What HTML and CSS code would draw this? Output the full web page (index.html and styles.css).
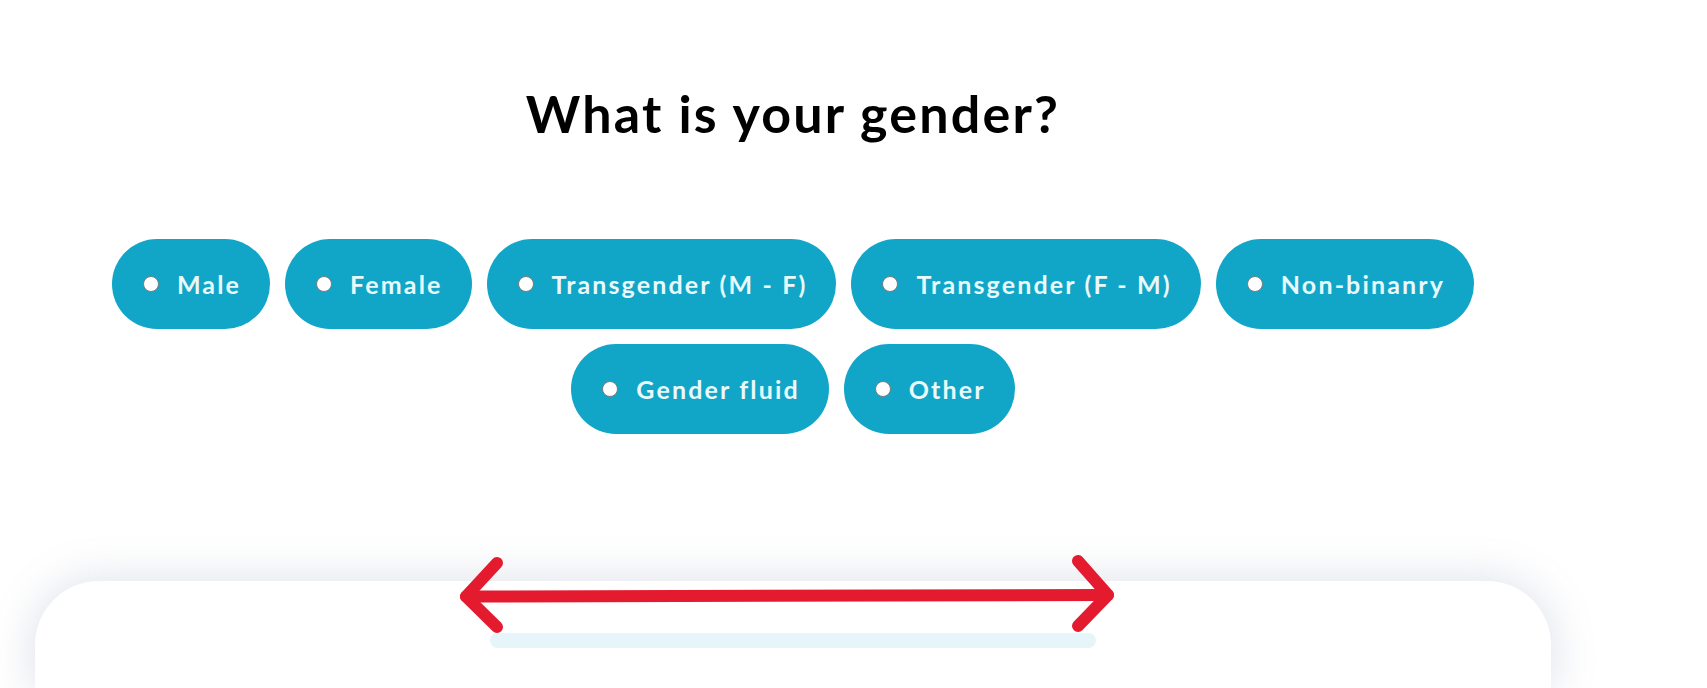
FILE: index.html
```html
<!DOCTYPE html>
<html lang="en">
<head>
<meta charset="utf-8">
<title>What is your gender?</title>
<link rel="stylesheet" href="styles.css">
</head>
<body>
<main class="page">
  <h1 class="question">What is your gender?</h1>
  <div class="options">
    <label class="option"><input type="radio" name="gender" value="male"><span>Male</span></label>
    <label class="option"><input type="radio" name="gender" value="female"><span>Female</span></label>
    <label class="option"><input type="radio" name="gender" value="mtf"><span>Transgender (M - F)</span></label>
    <label class="option"><input type="radio" name="gender" value="ftm"><span>Transgender (F - M)</span></label>
    <label class="option"><input type="radio" name="gender" value="nb"><span>Non-binanry</span></label>
    <label class="option"><input type="radio" name="gender" value="fluid"><span>Gender fluid</span></label>
    <label class="option"><input type="radio" name="gender" value="other"><span>Other</span></label>
  </div>
  <section class="card">
    <div class="track"></div>
  </section>
</main>
<svg class="annotation" width="1707" height="688" viewBox="0 0 1707 688" aria-hidden="true">
  <g fill="none" stroke="#e41a2f" stroke-width="12" stroke-linecap="round" stroke-linejoin="round">
    <path d="M466 596.5 L1108 595"/>
    <path d="M497 563 L466 596.5 L497 627"/>
    <path d="M1078 561 L1108 595 L1078 626"/>
  </g>
</svg>
</body>
</html>
```
FILE: styles.css
```css
html, body {
  margin: 0;
  padding: 0;
  background: #ffffff;
  overflow: hidden;
}
body {
  width: 1707px;
  height: 688px;
  position: relative;
  font-family: "Lato", "Noto Sans", sans-serif;
}
.page {
  width: 1516px;
  margin-left: 35px;
  padding-top: 82px;
  display: flex;
  flex-direction: column;
  align-items: center;
}
.question {
  margin: 0;
  font-size: 52px;
  line-height: 62px;
  font-weight: 700;
  color: #000;
  letter-spacing: 2.2px;
}
.options {
  margin-top: 95px;
  width: 100%;
  display: flex;
  flex-wrap: wrap;
  justify-content: center;
  gap: 15px;
}
.option {
  height: 90px;
  box-sizing: border-box;
  padding: 0 29px 0 31px;
  border-radius: 45px;
  background: #11a6c7;
  color: #e9f9fc;
  display: flex;
  align-items: center;
  font-size: 25px;
  font-weight: 700;
  letter-spacing: 2.15px;
  cursor: pointer;
}
.option input {
  appearance: none;
  -webkit-appearance: none;
  width: 16px;
  height: 16px;
  margin: 0 18px 0 0;
  box-sizing: border-box;
  border: 1.5px solid #7b7b7b;
  border-radius: 50%;
  background: #ffffff;
  flex: none;
}
.card {
  margin-top: 147px;
  width: 100%;
  height: 107px;
  background: #fff;
  border-radius: 64px 64px 0 0;
  box-shadow: 0 0 40px 4px rgba(120, 130, 165, 0.22);
  display: flex;
  justify-content: center;
  padding-top: 52px;
  box-sizing: border-box;
}
.track {
  width: 606px;
  height: 15px;
  border-radius: 8px;
  background: #e6f5f9;
}
.annotation {
  position: absolute;
  left: 0;
  top: 0;
  pointer-events: none;
}
```
